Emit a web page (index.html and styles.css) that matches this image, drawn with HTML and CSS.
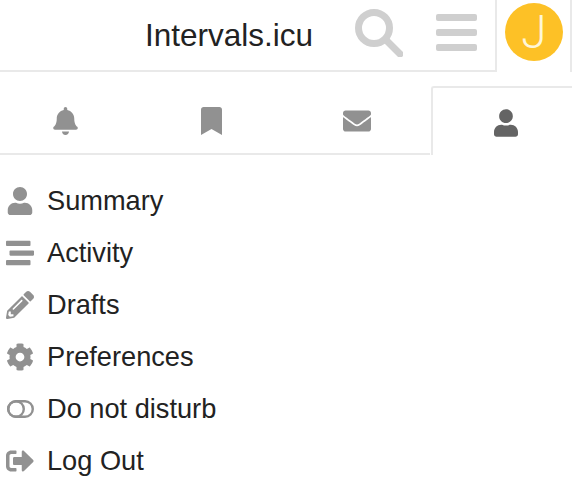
FILE: index.html
```html
<!DOCTYPE html>
<html lang="en">
<head>
<meta charset="utf-8">
<title>Intervals.icu</title>
<link rel="stylesheet" href="styles.css">
</head>
<body>
<header class="header">
  <div class="bar">
    <span class="title">Intervals.icu</span>
    <svg class="search" viewBox="0 0 48 48"><circle cx="19" cy="19" r="15.5" fill="none" stroke="currentColor" stroke-width="7"/><path d="M31 31 L45 45" stroke="currentColor" stroke-width="7" stroke-linecap="round" fill="none"/></svg>
    <div class="burger"><i></i><i></i><i></i></div>
  </div>
  <div class="avatar-cell"><div class="avatar">J</div></div>
</header>
<nav class="tabs">
  <div class="tab"><svg class="tab-icon bell" viewBox="0 0 448 512"><path d="M224 512c35.32 0 63.97-28.65 63.97-64H160.03c0 35.35 28.65 64 63.97 64zm215.39-149.71c-19.32-20.76-55.47-51.99-55.47-154.29 0-77.7-54.48-139.9-127.94-155.16V32c0-17.67-14.32-32-31.98-32s-31.98 14.33-31.98 32v20.84C118.56 68.1 64.08 130.3 64.08 208c0 102.3-36.15 133.53-55.47 154.29-6 6.45-8.66 14.16-8.61 21.71.11 16.4 12.98 32 32.1 32h383.8c19.12 0 32-15.6 32.1-32 .05-7.55-2.61-15.27-8.61-21.71z"/></svg></div>
  <div class="tab"><svg class="tab-icon mark" viewBox="0 0 384 512"><path d="M0 512V48C0 21.49 21.49 0 48 0h288c26.51 0 48 21.49 48 48v464L192 400 0 512z"/></svg></div>
  <div class="tab"><svg class="tab-icon mail" viewBox="0 0 512 512"><path d="M502.3 190.8c3.9-3.1 9.7-.2 9.7 4.7V400c0 26.5-21.5 48-48 48H48c-26.5 0-48-21.5-48-48V195.6c0-5 5.7-7.8 9.7-4.7 22.4 17.4 52.1 39.5 154.1 113.6 21.1 15.4 56.7 47.8 92.2 47.6 35.7.3 72-32.8 92.3-47.6 102-74.1 131.6-96.3 154-113.7zM256 320c23.2.4 56.6-29.2 73.4-41.4 132.7-96.3 142.8-104.7 173.4-128.7 5.8-4.5 9.2-11.5 9.2-18.9v-19c0-26.5-21.5-48-48-48H48C21.5 64 0 85.5 0 112v19c0 7.4 3.4 14.3 9.2 18.9 30.6 23.9 40.7 32.4 173.4 128.7 16.8 12.2 50.2 41.8 73.4 41.4z"/></svg></div>
  <div class="tab active"><svg class="tab-icon user" viewBox="0 0 448 512"><path d="M224 256c70.7 0 128-57.3 128-128S294.7 0 224 0 96 57.3 96 128s57.3 128 128 128zm89.6 32h-16.7c-22.2 10.2-46.9 16-72.9 16s-50.6-5.8-72.9-16h-16.7C60.2 288 0 348.2 0 422.4V464c0 26.5 21.5 48 48 48h352c26.5 0 48-21.5 48-48v-41.6c0-74.2-60.2-134.4-134.4-134.4z"/></svg></div>
</nav>
<ul class="menu">
  <li class="item"><svg class="icon" viewBox="0 0 448 512"><path d="M224 256c70.7 0 128-57.3 128-128S294.7 0 224 0 96 57.3 96 128s57.3 128 128 128zm89.6 32h-16.7c-22.2 10.2-46.9 16-72.9 16s-50.6-5.8-72.9-16h-16.7C60.2 288 0 348.2 0 422.4V464c0 26.5 21.5 48 48 48h352c26.5 0 48-21.5 48-48v-41.6c0-74.2-60.2-134.4-134.4-134.4z"/></svg><span>Summary</span></li>
  <li class="item"><svg class="icon" viewBox="0 0 512 512"><path d="M16 128h416c8.84 0 16-7.16 16-16V48c0-8.84-7.16-16-16-16H16C7.16 32 0 39.16 0 48v64c0 8.84 7.16 16 16 16zm480 80H80c-8.84 0-16 7.16-16 16v64c0 8.84 7.16 16 16 16h416c8.84 0 16-7.16 16-16v-64c0-8.84-7.16-16-16-16zm-64 176H16c-8.84 0-16 7.16-16 16v64c0 8.84 7.16 16 16 16h416c8.84 0 16-7.16 16-16v-64c0-8.84-7.16-16-16-16z"/></svg><span>Activity</span></li>
  <li class="item"><svg class="icon" viewBox="0 0 512 512"><path d="M497.9 142.1l-46.1 46.1c-4.7 4.7-12.3 4.7-17 0l-111-111c-4.7-4.7-4.7-12.3 0-17l46.1-46.1c18.7-18.7 49.1-18.7 67.9 0l60.1 60.1c18.8 18.7 18.8 49.1 0 67.9zM284.2 99.8L21.6 362.4.4 483.9c-2.9 16.4 11.4 30.6 27.8 27.8l121.5-21.3 262.6-262.6c4.7-4.7 4.7-12.3 0-17l-111-111c-4.8-4.7-12.4-4.7-17.1 0zM124.1 339.9c-5.5-5.5-5.5-14.3 0-19.8l154-154c5.5-5.5 14.3-5.5 19.8 0s5.5 14.3 0 19.8l-154 154c-5.5 5.5-14.3 5.5-19.8 0zM88 424h48v36.3l-64.5 11.3-31.1-31.1L51.7 376H88v48z"/></svg><span>Drafts</span></li>
  <li class="item"><svg class="icon" viewBox="0 0 512 512"><path d="M487.4 315.7l-42.6-24.6c4.3-23.2 4.3-47 0-70.2l42.6-24.6c4.9-2.8 7.1-8.6 5.5-14-11.1-35.6-30-67.8-54.7-94.6-3.8-4.1-10-5.1-14.8-2.3L380.8 110c-17.9-15.4-38.5-27.3-60.8-35.1V25.8c0-5.6-3.9-10.5-9.4-11.7-36.7-8.2-74.3-7.8-109.2 0-5.5 1.2-9.4 6.1-9.4 11.7V75c-22.2 7.9-42.8 19.8-60.8 35.1L88.7 85.5c-4.9-2.8-11-1.9-14.8 2.3-24.7 26.7-43.6 58.9-54.7 94.6-1.7 5.4.6 11.2 5.5 14L67.3 221c-4.3 23.2-4.3 47 0 70.2l-42.6 24.6c-4.9 2.8-7.1 8.6-5.5 14 11.1 35.6 30 67.8 54.7 94.6 3.8 4.1 10 5.1 14.8 2.3l42.6-24.6c17.9 15.4 38.5 27.3 60.8 35.1v49.2c0 5.6 3.9 10.5 9.4 11.7 36.7 8.2 74.3 7.8 109.2 0 5.5-1.2 9.4-6.1 9.4-11.7v-49.2c22.2-7.9 42.8-19.8 60.8-35.1l42.6 24.6c4.9 2.8 11 1.9 14.8-2.3 24.7-26.7 43.6-58.9 54.7-94.6 1.5-5.5-.7-11.3-5.6-14.1zM256 336c-44.1 0-80-35.9-80-80s35.9-80 80-80 80 35.9 80 80-35.9 80-80 80z"/></svg><span>Preferences</span></li>
  <li class="item"><svg class="icon" viewBox="0 0 28 28"><rect x="2.2" y="6.2" width="24.6" height="15.6" rx="7.8" fill="none" stroke="currentColor" stroke-width="2.4"/><circle cx="10" cy="14" r="7.8" fill="none" stroke="currentColor" stroke-width="2.4"/></svg><span>Do not disturb</span></li>
  <li class="item"><svg class="icon" viewBox="0 0 512 512"><path d="M497 273L329 441c-15 15-41 4.5-41-17v-96H152c-13.3 0-24-10.7-24-24v-96c0-13.3 10.7-24 24-24h136V88c0-21.4 25.9-32 41-17l168 168c9.3 9.4 9.3 24.6 0 34zM192 436v-40c0-6.6-5.4-12-12-12H96c-17.7 0-32-14.3-32-32V160c0-17.7 14.3-32 32-32h84c6.6 0 12-5.4 12-12V76c0-6.6-5.4-12-12-12H96c-53 0-96 43-96 96v192c0 53 43 96 96 96h84c6.6 0 12-5.4 12-12z"/></svg><span>Log Out</span></li>
</ul>
</body>
</html>
```
FILE: styles.css
```css
* { box-sizing: border-box; }
html, body { margin: 0; padding: 0; }
body {
  width: 572px;
  height: 500px;
  overflow: hidden;
  background: #fff;
  color: #222;
  font-family: "Liberation Sans", Arial, sans-serif;
}
.header { display: flex; height: 72px; }
.bar {
  width: 497px;
  display: flex;
  align-items: center;
  padding: 0 18px 0 145px;
  border-right: 2px solid #e9e9e9;
  border-bottom: 2px solid #e9e9e9;
}
.title { font-size: 31.5px; line-height: 36px; margin-right: auto; }
.search { width: 48px; height: 48px; color: #cfcfcf; margin: 0 33px 4px 0; }
.burger { width: 41px; display: flex; flex-direction: column; gap: 8px; margin-bottom: 5px; }
.burger i { display: block; height: 7px; border-radius: 2px; background: #cfcfcf; }
.avatar-cell {
  width: 75px;
  padding: 3px 0 0 8px;
  border-right: 2px solid #e9e9e9;
}
.avatar {
  width: 58px;
  height: 58px;
  border-radius: 50%;
  background: #fdc126;
  color: #fff6d8;
  font-family: Roboto, sans-serif;
  font-weight: 300;
  font-size: 46px;
  line-height: 58px;
  text-align: center;
}
.tabs { display: flex; margin: 14px 0 0 -8px; height: 69px; }
.tab {
  flex: none;
  width: 146px;
  display: flex;
  align-items: center;
  justify-content: center;
  border-bottom: 2px solid #e9e9e9;
  fill: #919191;
  padding-top: 2px;
}
.tab.active {
  width: 148px;
  margin-left: 1px;
  border: 2px solid #e9e9e9;
  border-bottom: 0;
  border-right: 0;
  border-top-left-radius: 3px;
  fill: #646464;
}
.tab-icon { display: block; }
.bell { width: 25px; height: 28px; }
.mark { width: 21px; height: 28px; }
.mail { width: 28px; height: 28px; }
.user { width: 24px; height: 28px; }
.menu { list-style: none; margin: 20px 0 0; padding: 0 0 0 6px; }
.item {
  display: flex;
  align-items: center;
  height: 52px;
  font-size: 27.2px;
  color: #222;
}
.icon {
  flex: none;
  width: 28px;
  height: 28px;
  margin-right: 13px;
  fill: #919191;
  color: #919191;
}
```
